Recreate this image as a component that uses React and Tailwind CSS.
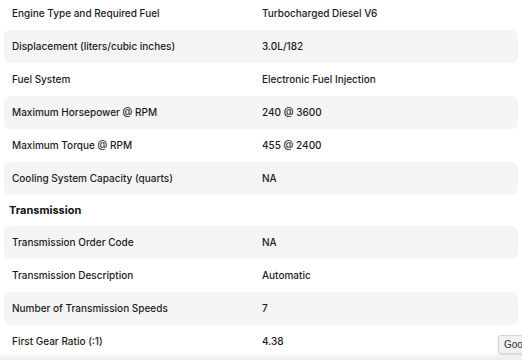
const engine = [
  ['Engine Type and Required Fuel', 'Turbocharged Diesel V6'],
  ['Displacement (liters/cubic inches)', '3.0L/182'],
  ['Fuel System', 'Electronic Fuel Injection'],
  ['Maximum Horsepower @ RPM', '240 @ 3600'],
  ['Maximum Torque @ RPM', '455 @ 2400'],
  ['Cooling System Capacity (quarts)', 'NA'],
]

const transmission = [
  ['Transmission Order Code', 'NA'],
  ['Transmission Description', 'Automatic'],
  ['Number of Transmission Speeds', '7'],
  ['First Gear Ratio (:1)', '4.38'],
]

function SpecRow({ label, value, shaded }) {
  return (
    <div
      className={`grid h-[33px] grid-cols-[250px_1fr] items-center rounded-md text-[10px] font-medium text-[#1c1c1c] ${
        shaded ? 'bg-[#f5f5f5]' : 'bg-white'
      }`}
    >
      <div className="pl-2">{label}</div>
      <div className="pl-2">{value}</div>
    </div>
  )
}

export default function App() {
  return (
    <div className="relative h-[360px] w-[522px] overflow-hidden bg-white font-['Inter','Liberation_Sans',sans-serif]">
      <div className="-mt-[3px] pl-1 pr-1">
        {engine.map(([label, value], i) => (
          <SpecRow key={label} label={label} value={value} shaded={i % 2 === 1} />
        ))}
        <div className="flex h-[31px] items-center pl-[5px] text-[11px] font-bold text-[#111]">Transmission</div>
        {transmission.map(([label, value], i) => (
          <SpecRow key={label} label={label} value={value} shaded={i % 2 === 0} />
        ))}
      </div>

      <div className="pointer-events-none absolute inset-x-0 bottom-0 h-[8px] bg-gradient-to-b from-transparent to-[#e4e4e4]/70" />

      <div className="absolute left-[498px] top-[335px] flex h-[19px] items-center rounded-[3px] border border-[#d6d6d6] bg-[#f1f1f1] pl-[5px] pr-2 font-['Liberation_Sans',sans-serif] text-[10px] text-[#333] shadow-sm">
        Google
      </div>
    </div>
  )
}
